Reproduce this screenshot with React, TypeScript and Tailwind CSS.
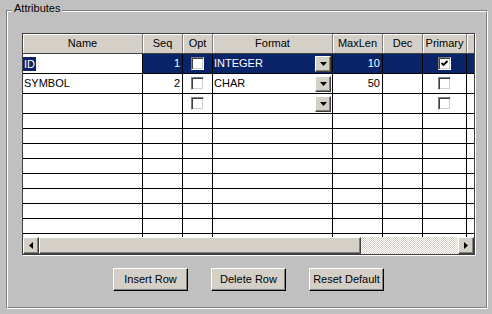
import React from 'react';

const cols = [
    { key: 'name', label: 'Name', w: 'w-[120px]' },
    { key: 'seq', label: 'Seq', w: 'w-[40px]' },
    { key: 'opt', label: 'Opt', w: 'w-[30px]' },
    { key: 'format', label: 'Format', w: 'w-[120px]' },
    { key: 'maxlen', label: 'MaxLen', w: 'w-[50px]' },
    { key: 'dec', label: 'Dec', w: 'w-[40px]' },
    { key: 'primary', label: 'Primary', w: 'w-[44px]' },
    { key: 'extra', label: '', w: 'w-[60px]' },
];

type Row = {
    name?: string;
    seq?: string;
    opt?: boolean;
    format?: string;
    combo?: boolean;
    maxlen?: string;
    primary?: boolean;
    selected?: boolean;
    tall?: boolean;
};

const rows: Row[] = [
    { name: 'ID', seq: '1', opt: false, format: 'INTEGER', combo: true, maxlen: '10', primary: true, selected: true, tall: true },
    { name: 'SYMBOL', seq: '2', opt: false, format: 'CHAR', combo: true, maxlen: '50', primary: false, tall: true },
    { opt: false, combo: true, primary: false, tall: true },
    {}, {}, {}, {}, {}, {}, {}, {}, {},
];

const Check = ({ checked }: { checked?: boolean }) => (
    <div className="w-[13px] h-[13px] bg-white border border-t-[#808080] border-l-[#808080] border-r-white border-b-white shadow-[inset_1px_1px_0_#404040,inset_-1px_-1px_0_#d4d0c8] flex items-center justify-center">
        {checked && (
            <svg width="9" height="9" viewBox="0 0 9 9">
                <polyline points="1.5,4 3.5,6 7.5,2" fill="none" stroke="#000" strokeWidth="1.8" />
            </svg>
        )}
    </div>
);

const Raised = ({ className, children }: { className: string; children?: React.ReactNode }) => (
    <div className={`bg-[#d4d0c8] border border-t-white border-l-white border-r-[#404040] border-b-[#404040] shadow-[inset_-1px_-1px_0_#808080] flex items-center justify-center ${className}`}>
        {children}
    </div>
);

const Cell = ({ col, row }: { col: string; row: Row }) => {
    const sel = row.selected;
    if (col === 'name') {
        return sel ? (
            <span className="bg-[#0a246a] text-white px-px leading-[14px]">{row.name}</span>
        ) : (
            <span className="pl-px">{row.name}</span>
        );
    }
    if (col === 'seq' || col === 'maxlen') {
        return <span className="ml-auto pr-[2px]">{row[col]}</span>;
    }
    if ((col === 'opt' || col === 'primary') && row.opt !== undefined) {
        return (
            <div className="w-full flex justify-center">
                <Check checked={col === 'primary' ? row.primary : row.opt} />
            </div>
        );
    }
    if (col === 'format' && row.combo) {
        return (
            <div className="w-full flex items-center justify-between">
                <span className="pl-px">{row.format}</span>
                <Raised className="w-[16px] h-[16px] mr-px">
                    <svg width="7" height="4" viewBox="0 0 7 4">
                        <polygon points="0,0 7,0 3.5,4" fill="#000" />
                    </svg>
                </Raised>
            </div>
        );
    }
    return null;
};

export default function App() {
    return (
        <div className="w-[492px] h-[314px] bg-[#c0c0c0] pt-[10px] pl-[6px] font-['Liberation_Sans',Arial,sans-serif] text-[11px] text-black overflow-hidden">
            <div className="relative w-[482px] h-[299px] border border-t-[#808080] border-l-[#808080] border-r-white border-b-white">
                <div className="h-full border border-t-white border-l-white border-r-[#808080] border-b-[#808080] pt-[21px] pl-[14px]">
                    {/* Grid */}
                    <div className="w-[453px] h-[222px] border border-[#404040] shadow-[1px_1px_0_#fff] flex flex-col overflow-hidden bg-white">
                        <div className="flex h-[20px] shrink-0">
                            {cols.map(c => (
                                <div
                                    key={c.key}
                                    className={`${c.w} shrink-0 bg-[#d4d0c8] border-r border-b border-r-[#808080] border-b-[#404040] shadow-[inset_1px_1px_0_#fff] flex items-center justify-center`}
                                >
                                    {c.label}
                                </div>
                            ))}
                        </div>
                        <div className="flex-1 overflow-hidden">
                            {rows.map((r, i) => (
                                <div key={i} className={`flex ${r.tall ? 'h-[20px]' : 'h-[15px]'}`}>
                                    {cols.map(c => (
                                        <div
                                            key={c.key}
                                            className={`${c.w} shrink-0 border-r border-b border-black flex items-center ${
                                                r.selected && c.key !== 'name' ? 'bg-[#0a246a] text-white' : 'bg-white'
                                            }`}
                                        >
                                            <Cell col={c.key} row={r} />
                                        </div>
                                    ))}
                                </div>
                            ))}
                        </div>
                        {/* Horizontal scrollbar */}
                        <div className="flex h-[17px] shrink-0">
                            <Raised className="w-[16px] h-full shrink-0">
                                <svg width="4" height="7" viewBox="0 0 4 7">
                                    <polygon points="4,0 4,7 0,3.5" fill="#000" />
                                </svg>
                            </Raised>
                            <Raised className="w-[322px] h-full shrink-0" />
                            <div className="flex-1 bg-[repeating-conic-gradient(#d4d0c8_0_25%,#ffffff_0_50%)] bg-[length:2px_2px]" />
                            <Raised className="w-[16px] h-full shrink-0">
                                <svg width="4" height="7" viewBox="0 0 4 7">
                                    <polygon points="0,0 0,7 4,3.5" fill="#000" />
                                </svg>
                            </Raised>
                        </div>
                    </div>

                    {/* Buttons */}
                    <div className="w-[453px] mt-[13px] flex justify-center gap-[23px]">
                        {['Insert Row', 'Delete Row', 'Reset Default'].map(b => (
                            <button
                                key={b}
                                className="w-[75px] h-[23px] bg-[#d4d0c8] border border-t-white border-l-white border-r-black border-b-black shadow-[inset_-1px_-1px_0_#808080] flex items-center justify-center"
                            >
                                {b}
                            </button>
                        ))}
                    </div>
                </div>
                <span className="absolute left-[5px] top-[-9px] px-[2px] bg-[#c0c0c0] leading-[13px]">Attributes</span>
            </div>
        </div>
    );
}
